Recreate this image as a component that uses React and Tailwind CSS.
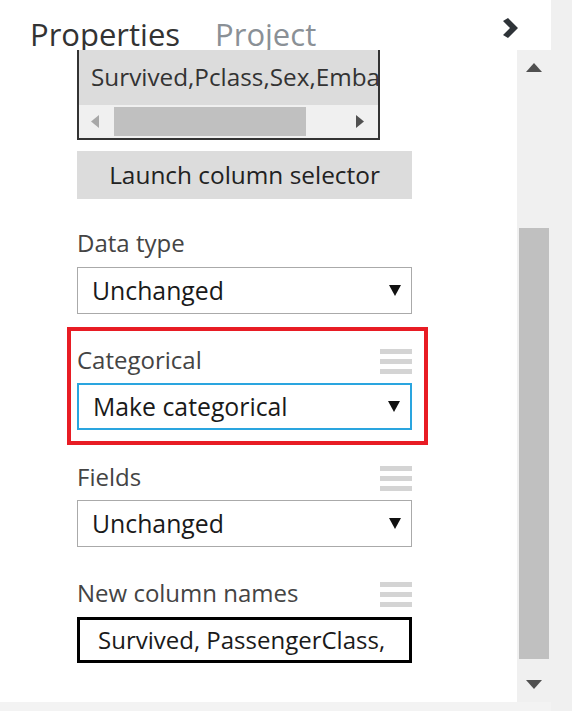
import React from "react";

const font = { fontFamily: '"Open Sans", "Noto Sans", sans-serif' };

function Hamburger() {
  return (
    <div className="flex flex-col gap-[5px] mt-[4px]">
      <div className="w-[32px] h-[5px] bg-[#d4d4d4]" />
      <div className="w-[32px] h-[5px] bg-[#d4d4d4]" />
      <div className="w-[32px] h-[5px] bg-[#d4d4d4]" />
    </div>
  );
}

function Arrow() {
  return (
    <svg width="12" height="11" viewBox="0 0 12 11" className="mr-[10px]">
      <polygon points="0,0 12,0 6,11" fill="#111" />
    </svg>
  );
}

function Select({ text, border }) {
  return (
    <div className={`w-[335px] h-[47px] flex items-center justify-between bg-white ${border}`}>
      <span className="pl-[14px] text-[24.8px] text-[#1a1a1a] leading-none">{text}</span>
      <Arrow />
    </div>
  );
}

function Label({ text, menu }) {
  return (
    <div className="w-[335px] h-[30px] flex justify-between items-start">
      <span className="text-[24px] leading-[30px] text-[#444]">{text}</span>
      {menu && <Hamburger />}
    </div>
  );
}

export default function App() {
  return (
    <div className="w-[572px] h-[711px] flex bg-white overflow-hidden" style={font}>
      <div className="w-[551px] h-full flex flex-col">
        <div className="h-[50px] flex items-start justify-between bg-white">
          <div className="flex items-baseline pl-[30px] pt-[14px] gap-[35px]">
            <span className="text-[31px] leading-[40px] text-[#333]">Properties</span>
            <span className="text-[31px] leading-[40px] text-[#8a9096]">Project</span>
          </div>
          <svg width="16" height="20" viewBox="0 0 16 20" className="mt-[18px] mr-[32px]">
            <polygon points="0,3 5,0 15,10 5,20 0,17 7,10" fill="#2e3338" />
          </svg>
        </div>
        <div className="flex-1 flex min-h-0">
          <div className="w-[517px] h-full pl-[77px] flex flex-col">
            <div className="w-[303px] h-[90px] border-x-2 border-b-2 border-[#333] flex flex-col">
              <div className="h-[55px] bg-[#dcdcdc] flex items-center overflow-hidden whitespace-nowrap">
                <span className="pl-[12px] text-[24.3px] text-[#333] leading-none">Survived,Pclass,Sex,Embarked</span>
              </div>
              <div className="flex-1 bg-[#f0f0f0] flex items-center">
                <svg width="8" height="13" viewBox="0 0 8 13" className="ml-[12px]">
                  <polygon points="8,0 8,13 0,6.5" fill="#a8a8a8" />
                </svg>
                <div className="ml-[15px] w-[192px] h-[29px] bg-[#c0c0c0]" />
                <svg width="8" height="13" viewBox="0 0 8 13" className="ml-[50px]">
                  <polygon points="0,0 0,13 8,6.5" fill="#505050" />
                </svg>
              </div>
            </div>
            <div className="mt-[11px] w-[335px] h-[48px] bg-[#dcdcdc] flex items-center justify-center">
              <span className="text-[24.4px] text-[#222] leading-none">Launch column selector</span>
            </div>
            <div className="pt-[29px]">
              <Label text="Data type" />
            </div>
            <div className="mt-[9px]">
              <Select text="Unchanged" border="border border-[#aaaaaa]" />
            </div>
            <div className="mt-[13px] -ml-[10px] w-[361px] border-[4px] border-[#e81c24] pl-[6px] pt-[14px] pb-[11px]">
              <Label text="Categorical" menu />
              <div className="mt-[8px]">
                <Select text="Make categorical" border="border-2 border-[#2aa5df]" />
              </div>
            </div>
            <div className="pt-[17px]">
              <Label text="Fields" menu />
            </div>
            <div className="mt-[8px]">
              <Select text="Unchanged" border="border border-[#aaaaaa]" />
            </div>
            <div className="pt-[31px]">
              <Label text="New column names" menu />
            </div>
            <div className="mt-[9px] w-[335px] h-[46px] border-[3px] border-black flex items-center">
              <span className="pl-[18px] text-[24px] text-[#1a1a1a] leading-none whitespace-nowrap">Survived, PassengerClass,</span>
            </div>
          </div>
          <div className="w-[34px] h-full bg-[#f0f0f0] flex flex-col items-center">
            <svg width="16" height="9" viewBox="0 0 16 9" className="mt-[13px]">
              <polygon points="0,9 16,9 8,0" fill="#505050" />
            </svg>
            <div className="mt-[156px] w-[30px] h-[431px] bg-[#c0c0c0]" />
            <svg width="16" height="9" viewBox="0 0 16 9" className="mt-[21px]">
              <polygon points="0,0 16,0 8,9" fill="#505050" />
            </svg>
          </div>
        </div>
        <div className="h-[9px] bg-[#f3f3f3]" />
      </div>
      <div className="w-[21px] h-full bg-[#f0f0f0]" />
    </div>
  );
}
